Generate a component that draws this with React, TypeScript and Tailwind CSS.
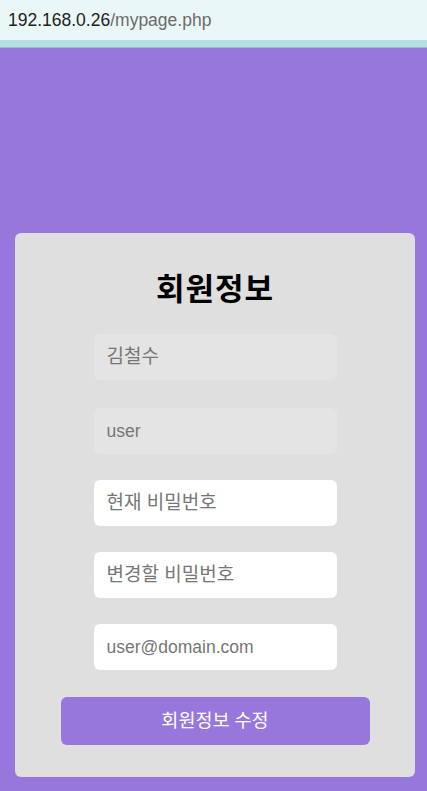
export default function App() {
  const fields = [
    { value: "김철수", disabled: true, ko: true },
    { value: "user", disabled: true, ko: false },
    { value: "현재 비밀번호", disabled: false, ko: true },
    { value: "변경할 비밀번호", disabled: false, ko: true },
    { value: "user@domain.com", disabled: false, ko: false },
  ];

  return (
    <div
      className="min-h-screen flex flex-col bg-[#9777dc]"
      style={{ fontFamily: '"Liberation Sans", "Noto Sans CJK KR", sans-serif' }}
    >
      <div className="h-[40px] bg-[#eaf7f7] flex items-center px-[8px] pt-[1px] text-[17.5px]">
        <span className="text-[#222]">192.168.0.26</span>
        <span className="text-[#6b6b6b]">/mypage.php</span>
      </div>
      <div className="h-[8px] bg-[#b6dfe3] border-b border-[#9cbcc2]" />

      <div className="pl-[15px] pt-[185px] pb-[12px]">
        <div className="w-[400px] bg-[#dfdfdf] rounded-[6px] flex flex-col items-center pt-[37px] pb-[32px]">
          <h1 className="text-[31px] tracking-[1px] font-bold text-black leading-[40px] mb-[24px]">회원정보</h1>
          <div className="flex flex-col gap-[26px]">
            {fields.map((f, i) => (
              <div
                key={f.value}
                className={
                  "w-[243px] h-[46px] rounded-[6px] flex items-center px-[13px] text-[#767676] " +
                  (f.ko ? "text-[19px] " : "text-[17.5px] ") +
                  (i === 1 ? "mt-[2px] " : "") +
                  (f.disabled ? "bg-[#e4e4e4]" : "bg-white")
                }
              >
                {f.value}
              </div>
            ))}
          </div>
          <button className="mt-[27px] w-[309px] h-[48px] rounded-[6px] bg-[#9777dc] text-white text-[18.5px]">
            회원정보 수정
          </button>
        </div>
      </div>
    </div>
  );
}
